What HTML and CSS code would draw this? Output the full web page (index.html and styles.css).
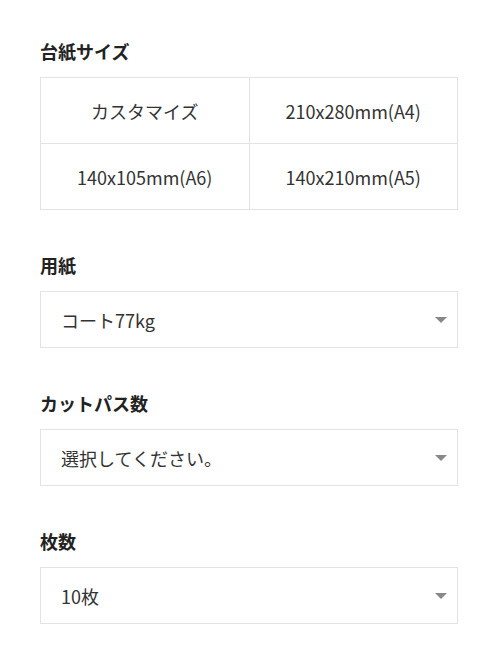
FILE: index.html
```html
<!DOCTYPE html>
<html lang="ja">
<head>
    <meta charset="UTF-8">
    <meta name="viewport" content="width=device-width, initial-scale=1.0">
    <title>注文オプション</title>
    <link rel="stylesheet" href="styles.css">
</head>
<body>
    <div class="container">
        <!-- 台紙サイズ -->
        <div class="field">
            <div class="field-label">台紙サイズ</div>
            <div class="size-grid">
                <div class="size-cell">カスタマイズ</div>
                <div class="size-cell">210x280mm(A4)</div>
                <div class="size-cell">140x105mm(A6)</div>
                <div class="size-cell">140x210mm(A5)</div>
            </div>
        </div>

        <!-- 用紙 -->
        <div class="field">
            <div class="field-label">用紙</div>
            <div class="select-box">
                <span>コート77kg</span>
                <svg class="arrow" width="12" height="6" viewBox="0 0 12 6"><path d="M0 0h12L6 6z"/></svg>
            </div>
        </div>

        <!-- カットパス数 -->
        <div class="field">
            <div class="field-label">カットパス数</div>
            <div class="select-box">
                <span>選択してください。</span>
                <svg class="arrow" width="12" height="6" viewBox="0 0 12 6"><path d="M0 0h12L6 6z"/></svg>
            </div>
        </div>

        <!-- 枚数 -->
        <div class="field">
            <div class="field-label">枚数</div>
            <div class="select-box">
                <span>10枚</span>
                <svg class="arrow" width="12" height="6" viewBox="0 0 12 6"><path d="M0 0h12L6 6z"/></svg>
            </div>
        </div>
    </div>
</body>
</html>
```

FILE: styles.css
```css
/* 全体 */
body {
    margin: 0;
    background-color: #fff;
    color: #333;
    font-family: "Noto Sans CJK JP", "Noto Sans", sans-serif;
    font-size: 18px;
}

.container {
    width: 418px;
    margin-left: 40px;
    padding-top: 38px;
}

/* 項目 */
.field {
    margin-bottom: 42px;
}

.field-label {
    font-weight: bold;
    line-height: 26px;
    margin-bottom: 13px;
    color: #222;
}

/* 台紙サイズの表 */
.size-grid {
    display: grid;
    grid-template-columns: 1fr 1fr;
    gap: 1px;
    background-color: #e1e3e8;
    border: 1px solid #e1e3e8;
}

.size-cell {
    height: 65px;
    display: flex;
    align-items: center;
    justify-content: center;
    background-color: #fff;
}

/* セレクト */
.select-box {
    height: 55px;
    border: 1px solid #e1e3e8;
    display: flex;
    align-items: center;
    justify-content: space-between;
    padding: 0 10px 0 20px;
}

.arrow {
    fill: #888;
}
```
